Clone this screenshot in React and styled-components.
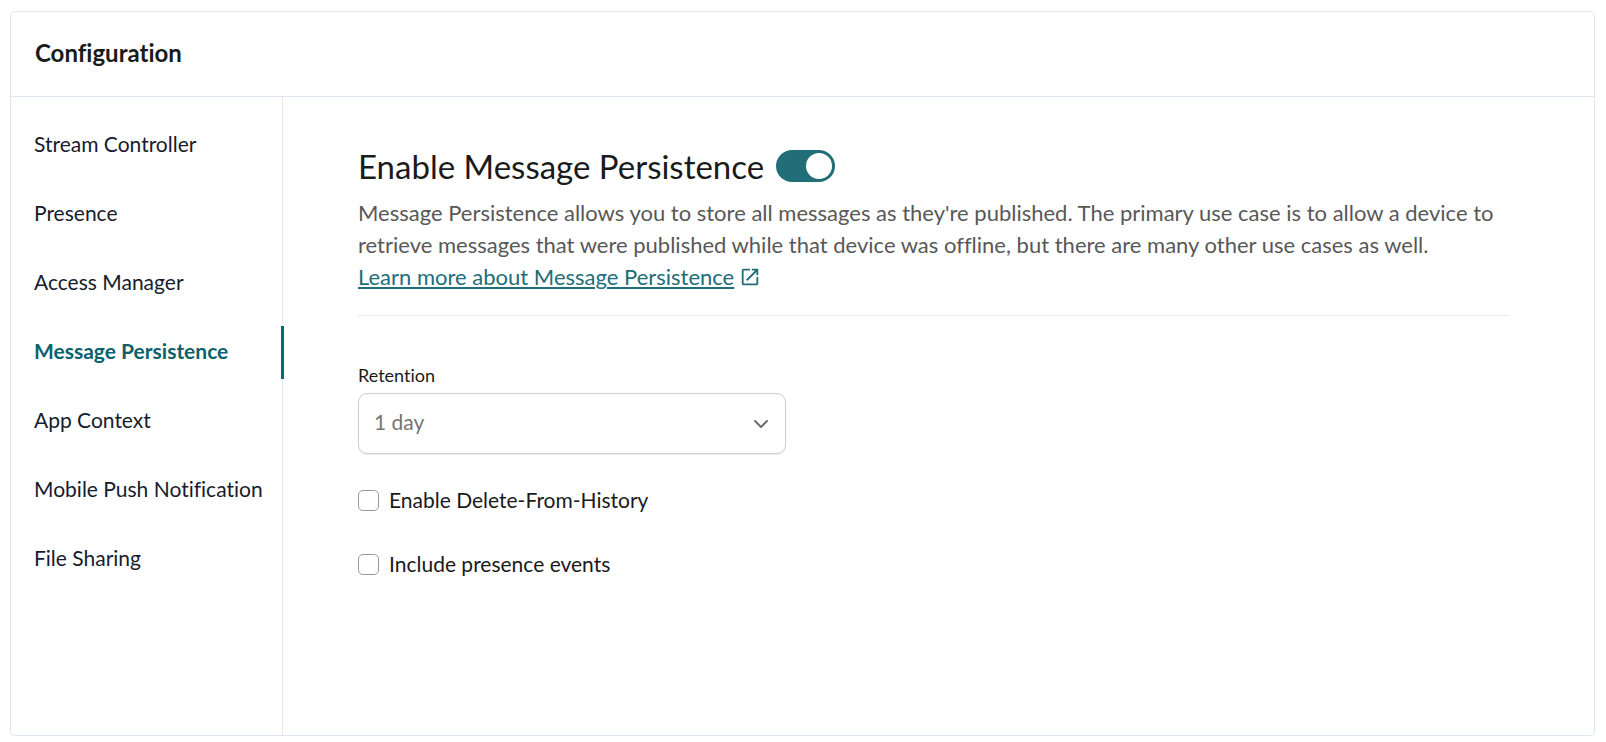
import React, { useState } from "react";
import styled, { createGlobalStyle } from "styled-components";
import { FiChevronDown } from "react-icons/fi";
import { MdOpenInNew } from "react-icons/md";

const navItems = [
    "Stream Controller",
    "Presence",
    "Access Manager",
    "Message Persistence",
    "App Context",
    "Mobile Push Notification",
    "File Sharing",
];

const retentionOptions = ["1 day", "7 days", "30 days", "3 months", "6 months", "1 year", "Unlimited"];

const GlobalStyle = createGlobalStyle`
    * {
        box-sizing: border-box;
    }

    body {
        margin: 0;
        background-color: #fff;
        color: #1a1a1a;
        font-family: Lato, "Liberation Sans", sans-serif;
        font-size: 21px;
        font-variant-ligatures: none;
    }

    button,
    select {
        font-family: inherit;
        font-size: inherit;
    }
`;

const Page = styled.div`
    display: flex;
    min-height: 100vh;
    padding: 11px 11px 6px 10px;
`;

const Card = styled.section`
    flex: 1;
    display: flex;
    flex-direction: column;
    border: 1px solid #e0e6f2;
    border-radius: 5px;
`;

const CardHeader = styled.header`
    padding: 26px 24px 28px;
    border-bottom: 1px solid #e0e6f2;
`;

const CardTitle = styled.h1`
    margin: 0;
    font-size: 24px;
    line-height: 30px;
    font-weight: 700;
`;

const CardBody = styled.div`
    flex: 1;
    display: flex;
`;

const Nav = styled.nav`
    flex: none;
    width: 272px;
    padding-top: 22px;
    border-right: 1px solid #e2e4e8;
`;

const NavList = styled.ul`
    display: flex;
    flex-direction: column;
    gap: 16px;
    margin: 0 -2px 0 0;
    padding: 0;
    list-style: none;
`;

const NavLink = styled.a`
    display: block;
    padding: 0 0 4px 23px;
    border-right: 3px solid ${({ $active }) => ($active ? "#0e6a72" : "transparent")};
    color: ${({ $active }) => ($active ? "#0a626b" : "#161c2d")};
    font-weight: ${({ $active }) => ($active ? 700 : 400)};
    line-height: 49px;
    text-decoration: none;
    white-space: nowrap;
`;

const Content = styled.main`
    flex: 1;
    min-width: 0;
    padding: 53px 85px 32px 75px;
`;

const TitleRow = styled.div`
    display: flex;
    align-items: center;
    gap: 12px;
`;

const Title = styled.h2`
    margin: 0;
    font-size: 33px;
    line-height: 32px;
    font-weight: 400;
`;

const Toggle = styled.button`
    display: flex;
    justify-content: ${({ $on }) => ($on ? "flex-end" : "flex-start")};
    align-items: center;
    width: 59px;
    height: 32px;
    padding: 3px;
    border: none;
    border-radius: 16px;
    background-color: ${({ $on }) => ($on ? "#216e79" : "#b5b5b5")};
    cursor: pointer;
`;

const Knob = styled.span`
    width: 26px;
    height: 26px;
    border-radius: 50%;
    background-color: #fff;
`;

const Description = styled.p`
    margin: 15px 0 0;
    padding-bottom: 22px;
    border-bottom: 1px solid #ebebeb;
    color: #585858;
    font-size: 22px;
    line-height: 32px;
`;

const LearnMore = styled.a`
    display: flex;
    align-items: center;
    gap: 5px;
    width: fit-content;
    color: #216e79;
    text-decoration-thickness: 2px;
    text-underline-offset: 2px;
`;

const Label = styled.label`
    display: block;
    margin-top: 48px;
    font-size: 18px;
    line-height: 22px;
`;

const SelectBox = styled.div`
    display: grid;
    align-items: center;
    max-width: 428px;
    margin-top: 7px;

    > * {
        grid-area: 1 / 1;
    }

    svg {
        justify-self: end;
        margin-right: 13px;
        color: #707070;
        pointer-events: none;
    }
`;

const Select = styled.select`
    width: 100%;
    height: 61px;
    padding: 0 48px 4px 15px;
    appearance: none;
    border: 1px solid #cfcfcf;
    border-radius: 9px;
    background-color: #fff;
    box-shadow: 0 1px 1px rgba(0, 0, 0, 0.08);
    color: #757575;
`;

const CheckList = styled.div`
    display: flex;
    flex-direction: column;
    gap: 32px;
    margin-top: 30px;
`;

const CheckLabel = styled.label`
    display: flex;
    align-items: center;
    gap: 10px;
    width: fit-content;
    line-height: 32px;
`;

const Checkbox = styled.input`
    width: 21px;
    height: 21px;
    margin: 0;
    appearance: none;
    border: 1px solid #9a9a9a;
    border-radius: 5px;
    background-color: #fff;

    &:checked {
        border-color: #216e79;
        background-color: #216e79;
    }
`;

const App = () => {
    const [active, setActive] = useState("Message Persistence");
    const [enabled, setEnabled] = useState(true);
    const [retention, setRetention] = useState("1 day");

    return (
        <>
            <GlobalStyle />
            <Page>
                <Card>
                    <CardHeader>
                        <CardTitle>Configuration</CardTitle>
                    </CardHeader>
                    <CardBody>
                        <Nav>
                            <NavList>
                                {navItems.map((item) => (
                                    <li key={item}>
                                        <NavLink
                                            href="#"
                                            $active={item === active}
                                            onClick={() => setActive(item)}
                                        >
                                            {item}
                                        </NavLink>
                                    </li>
                                ))}
                            </NavList>
                        </Nav>
                        <Content>
                            <TitleRow>
                                <Title id="persistence-title">Enable Message Persistence</Title>
                                <Toggle
                                    type="button"
                                    role="switch"
                                    aria-checked={enabled}
                                    aria-labelledby="persistence-title"
                                    $on={enabled}
                                    onClick={() => setEnabled(!enabled)}
                                >
                                    <Knob />
                                </Toggle>
                            </TitleRow>
                            <Description>
                                Message Persistence allows you to store all messages as they're
                                published. The primary use case is to allow a device to retrieve
                                messages that were published while that device was offline, but
                                there are many other use cases as well.
                                <LearnMore href="#">
                                    Learn more about Message Persistence
                                    <MdOpenInNew size={22} />
                                </LearnMore>
                            </Description>

                            <Label htmlFor="retention">Retention</Label>
                            <SelectBox>
                                <Select
                                    id="retention"
                                    value={retention}
                                    onChange={(e) => setRetention(e.target.value)}
                                >
                                    {retentionOptions.map((option) => (
                                        <option key={option}>{option}</option>
                                    ))}
                                </Select>
                                <FiChevronDown size={24} />
                            </SelectBox>

                            <CheckList>
                                <CheckLabel>
                                    <Checkbox type="checkbox" />
                                    Enable Delete-From-History
                                </CheckLabel>
                                <CheckLabel>
                                    <Checkbox type="checkbox" />
                                    Include presence events
                                </CheckLabel>
                            </CheckList>
                        </Content>
                    </CardBody>
                </Card>
            </Page>
        </>
    );
};

export default App;
